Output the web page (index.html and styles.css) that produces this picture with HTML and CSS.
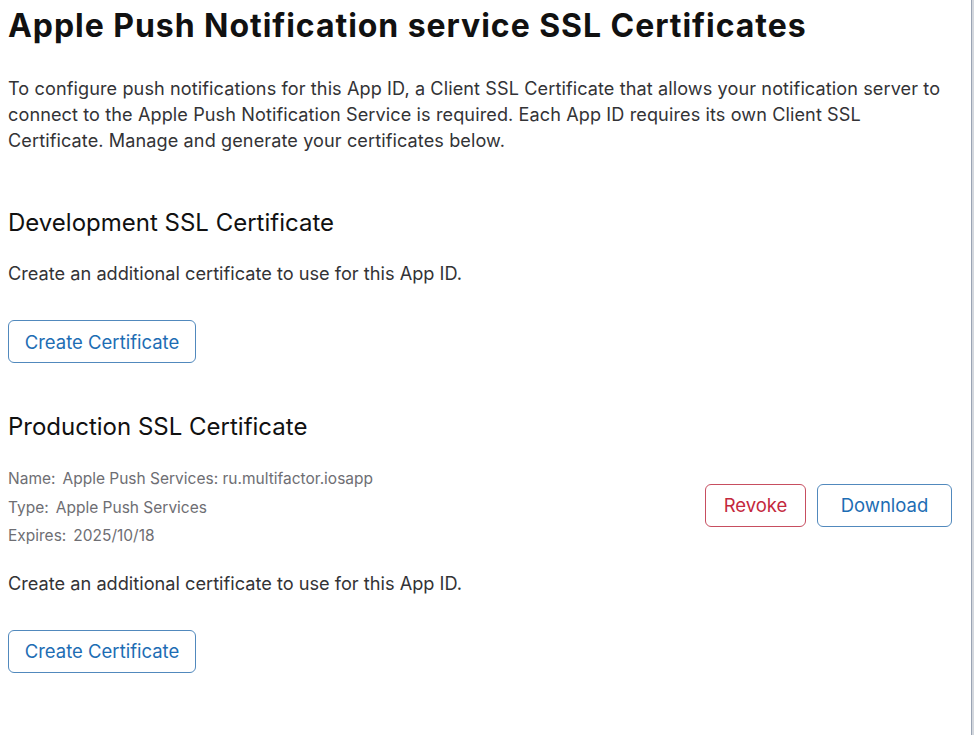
FILE: index.html
```html
<!DOCTYPE html>
<html>
<head>
<meta charset="utf-8">
<link rel="stylesheet" href="styles.css">
</head>
<body>
<div class="frame">
  <main class="page">
    <h1 class="title">Apple Push Notification service SSL Certificates</h1>
    <p class="intro">To configure push notifications for this App ID, a Client SSL Certificate that allows your notification server to connect to the Apple Push Notification Service is required. Each App ID requires its own Client SSL Certificate. Manage and generate your certificates below.</p>

    <section class="section dev">
      <h2 class="heading">Development SSL Certificate</h2>
      <p class="text">Create an additional certificate to use for this App ID.</p>
      <button class="btn btn-blue create">Create Certificate</button>
    </section>

    <section class="section prod">
      <h2 class="heading">Production SSL Certificate</h2>
      <div class="cert-row">
        <dl class="meta">
          <div class="meta-line"><dt>Name:</dt><dd>Apple Push Services: ru.multifactor.iosapp</dd></div>
          <div class="meta-line"><dt>Type:</dt><dd>Apple Push Services</dd></div>
          <div class="meta-line"><dt>Expires:</dt><dd>2025/10/18</dd></div>
        </dl>
        <div class="actions">
          <button class="btn btn-red revoke">Revoke</button>
          <button class="btn btn-blue download">Download</button>
        </div>
      </div>
      <p class="text">Create an additional certificate to use for this App ID.</p>
      <button class="btn btn-blue create">Create Certificate</button>
    </section>
  </main>
  <div class="edge"></div>
</div>
</body>
</html>
```
FILE: styles.css
```css
* { box-sizing: border-box; }
html, body { margin: 0; padding: 0; background: #fff; }
body {
  font-family: Inter, "Noto Sans", "Liberation Sans", sans-serif;
  color: #1d1d1f;
  width: 974px;
  height: 735px;
  overflow: hidden;
}
.frame {
  display: flex;
  height: 735px;
}
.page {
  flex: 1;
  padding: 0 0 0 8px;
}
.edge {
  width: 3px;
  background: #d3d7dd;
  border-left: 1.5px solid #9aa4b4;
}
.title {
  margin: 7px 0 0;
  font-size: 32px;
  line-height: 38px;
  font-weight: 700;
  color: #111;
  letter-spacing: 0.95px;
}
.intro {
  margin: 30px 0 0;
  font-size: 18.1px;
  line-height: 26px;
  color: #333336;
  width: 936px;
  letter-spacing: 0.1px;
}
.section { margin: 0; }
.dev { margin-top: 55px; }
.heading {
  margin: 0;
  font-size: 24px;
  line-height: 30px;
  font-weight: 400;
  color: #111;
}
.text {
  margin: 0;
  font-size: 18.2px;
  line-height: 26px;
  color: #333336;
}
.dev .text { margin-top: 22px; }
.btn {
  font-family: inherit;
  font-size: 18.5px;
  background: #fff;
  border-radius: 6px;
  height: 43px;
  padding: 0 15px;
  cursor: pointer;
}
.btn-blue {
  color: #1d6db4;
  border: 1.5px solid #5189bd;
}
.btn-red {
  color: #c4283d;
  border: 1.5px solid #c74e60;
}
.create { margin-top: 34px; width: 188px; padding: 0; }
.prod { margin-top: 49px; }
.cert-row {
  display: flex;
  align-items: center;
  justify-content: space-between;
  margin-top: 23px;
  padding-right: 19px;
}
.meta { margin: 0; }
.meta-line {
  display: flex;
  gap: 7px;
  font-size: 15.5px;
  line-height: 28.5px;
  color: #6e6e73;
}
.meta dt, .meta dd { margin: 0; }
.actions { display: flex; gap: 11px; margin-top: -5px; }
.revoke { width: 101px; padding: 0; }
.download { width: 135px; padding: 0; }
.prod .text { margin-top: 19px; }
```
